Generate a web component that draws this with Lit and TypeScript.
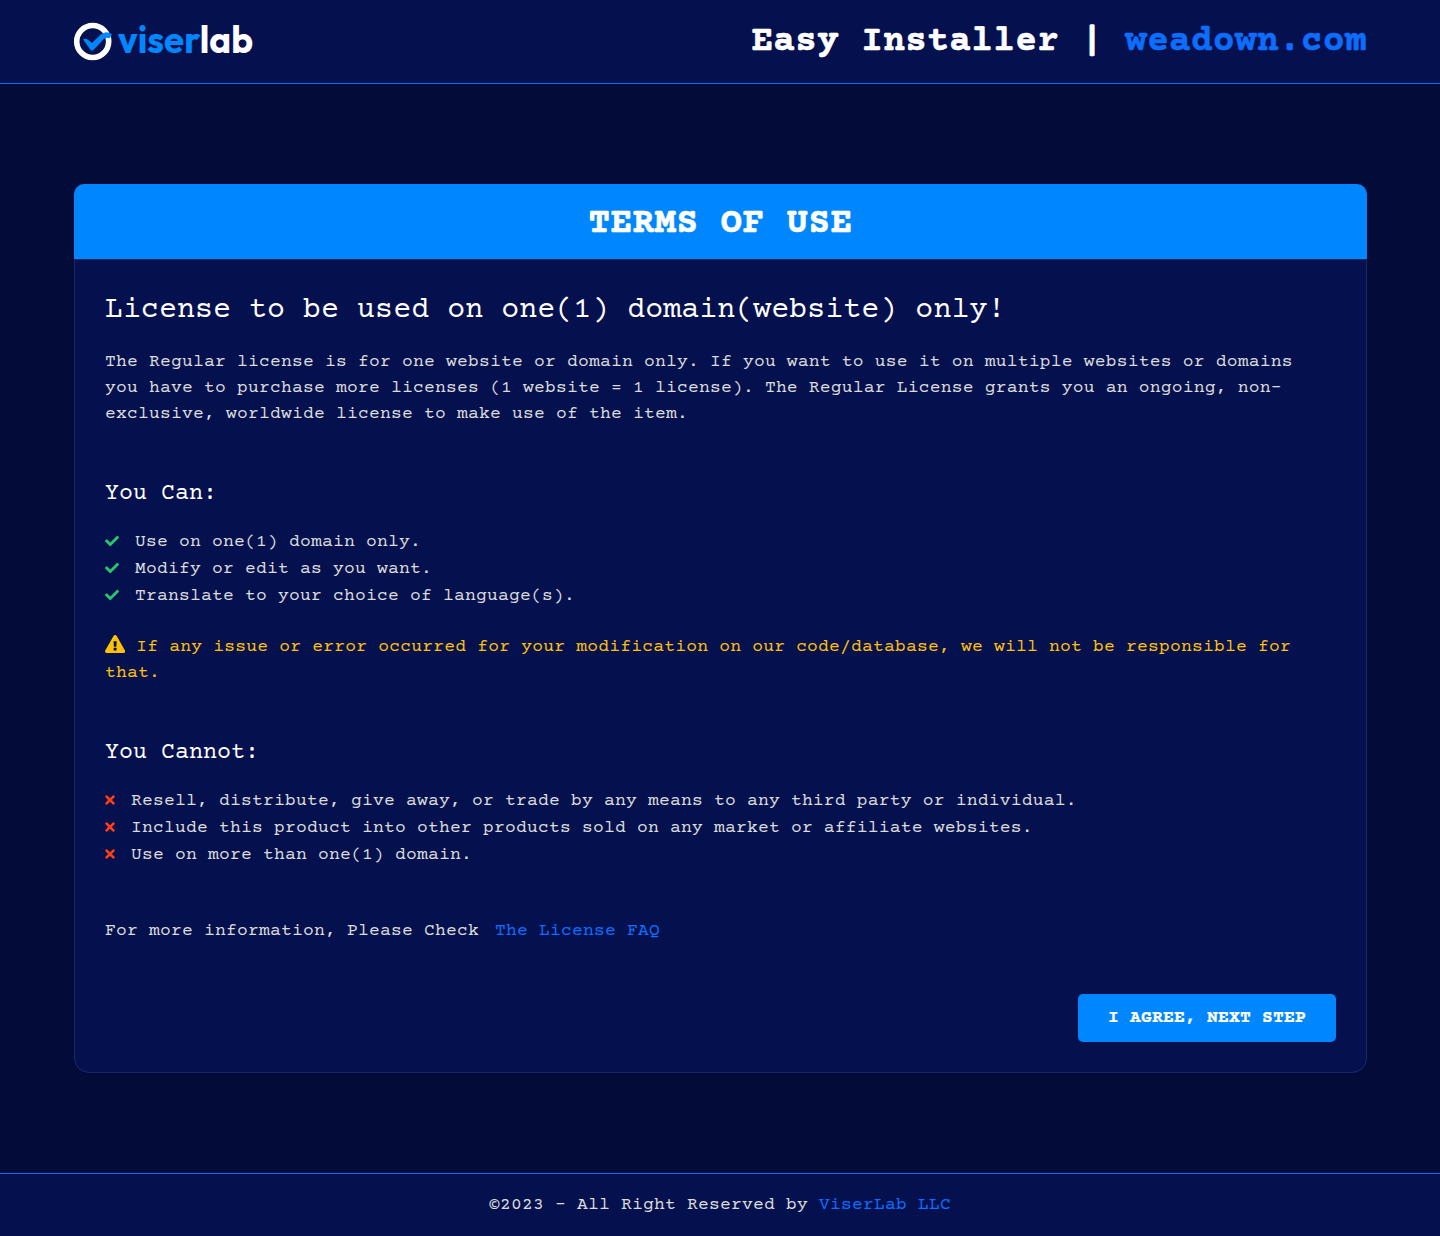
import { LitElement, html, css, svg } from "lit";
import { customElement } from "lit/decorators.js";

const check = svg`<path d="M173.898 439.404l-166.4-166.4c-9.997-9.997-9.997-26.206 0-36.204l36.203-36.204c9.997-9.998 26.207-9.998 36.204 0L192 312.69 432.095 72.596c9.997-9.997 26.207-9.997 36.204 0l36.203 36.204c9.997 9.997 9.997 26.206 0 36.204l-294.4 294.401c-9.998 9.997-26.207 9.997-36.204-.001z"/>`;
const cross = svg`<path d="M242.72 256l100.07-100.07c12.28-12.28 12.28-32.19 0-44.48l-22.24-22.24c-12.28-12.28-32.19-12.28-44.48 0L176 189.28 75.93 89.21c-12.28-12.28-32.19-12.28-44.48 0L9.21 111.45c-12.28 12.28-12.28 32.19 0 44.48L109.28 256 9.21 356.07c-12.28 12.28-12.28 32.19 0 44.48l22.24 22.24c12.28 12.28 32.2 12.28 44.48 0L176 322.72l100.07 100.07c12.28 12.28 32.2 12.28 44.48 0l22.24-22.24c12.28-12.28 12.28-32.19 0-44.48L242.72 256z"/>`;
const warn = svg`<path d="M569.517 440.013C587.975 472.007 564.806 512 527.94 512H48.054c-36.937 0-59.999-40.055-41.577-71.987L246.423 23.985c18.467-32.009 64.72-31.951 83.154 0l239.94 416.028zM288 354c-25.405 0-46 20.595-46 46s20.595 46 46 46 46-20.595 46-46-20.595-46-46-46zm-43.673-165.346l7.418 136c.347 6.364 5.609 11.346 11.982 11.346h48.546c6.373 0 11.635-4.982 11.982-11.346l7.418-136c.375-6.874-5.098-12.654-11.982-12.654h-63.383c-6.884 0-12.356 5.78-11.981 12.654z"/>`;

const allowed = [
  "Use on one(1) domain only.",
  "Modify or edit as you want.",
  "Translate to your choice of language(s).",
];
const forbidden = [
  "Resell, distribute, give away, or trade by any means to any third party or individual.",
  "Include this product into other products sold on any market or affiliate websites.",
  "Use on more than one(1) domain.",
];

@customElement("app-root")
export class AppRoot extends LitElement {
  static styles = css`
    :host {
      display: flex; flex-direction: column; min-height: 1236px;
      background: #030b38; color: #dbdbdb;
      font: 18px/26px "Courier Prime", "Liberation Mono", monospace;
      letter-spacing: 0.205px;
    }
    * { box-sizing: border-box; margin: 0; padding: 0; }
    a { color: #0d6efd; text-decoration: none; }
    header {
      height: 84px; padding: 0 73px 0 74px; background: #05114e;
      border-bottom: 1px solid #0d6efd;
      display: flex; justify-content: space-between; align-items: flex-start;
    }
    .logo { width: 180px; height: 40px; margin-top: 21px; display: block; overflow: visible; }
    .logo-text { font: 700 38px/40px "Outfit", "Quicksand", sans-serif; letter-spacing: 0; }
    .blue { fill: #0087ff; }
    .white { fill: #fff; }
    h1, .card-title { font-size: 36px; line-height: 43px; color: #fff; letter-spacing: 0.4px; -webkit-text-stroke: 0.5px currentColor; }
    h1 { margin-top: 21px; }
    h1 a { -webkit-text-stroke-color: #0d6efd; }
    main { padding: 100px 73px 100px 74px; }
    .card { border-radius: 15px; background: #05114e; }
    .card-title {
      height: 75px; border-radius: 10px 10px 0 0; background: #0087ff;
      padding-top: 19px; text-align: center;
    }
    .card-body {
      height: 814px; padding: 30px; border: 1px solid #1c2762;
      border-radius: 0 0 15px 15px; display: flex; flex-direction: column;
    }
    h3, h4 { font-weight: 400; color: #fff; letter-spacing: 0; }
    h3 { font-size: 30px; line-height: 36px; margin-top: 3px; letter-spacing: 0.02px; }
    h4 { font-size: 23.33px; line-height: 29px; margin-top: 53px; }
    .lead { margin-top: 20px; }
    ul { list-style: none; margin-top: 20px; }
    li { height: 27px; display: flex; align-items: flex-start; }
    li svg { width: 14px; height: 14px; margin: 5px 16px 0 0; fill: #28c76f; flex: none; }
    .no li svg { width: 10px; height: 14px; fill: #ff4017; }
    .warning { color: #ffc107; margin-top: 24px; }
    .warning svg { width: 20.25px; height: 18px; fill: #ffc107; vertical-align: -2px; }
    .info { margin-top: 49px; }
    .info a { margin-left: 5px; }
    .next {
      align-self: flex-end; margin-top: auto; width: 258px; height: 48px; line-height: 48px;
      background: #0087ff; color: #fff; border-radius: 5px; font-weight: 700; text-align: center;
      -webkit-text-stroke: 0.2px #fff;
    }
    footer {
      height: 63px; border-top: 1px solid #0d6efd; background: #05114e;
      text-align: center; padding-top: 18px;
    }
  `;

  render() {
    return html`
      <header>
        <svg class="logo" viewBox="0 0 180 40">
          <circle cx="18.7" cy="20.5" r="16" fill="none" stroke="#fff" stroke-width="5.6" />
          <path d="M9 18.2q3.3-1.2 6 1.2l3 2.6 8.5-8.2q5.5-5 11.5-.5l-2.5 4q-3.5-1.500-6 1L19.500 29q-1.500 1.200-3 0z" fill="#0087ff" />
          <text class="logo-text" x="44" y="31.5" textLength="135" lengthAdjust="spacingAndGlyphs"><tspan class="blue">viser</tspan><tspan class="white">lab</tspan></text>
        </svg>
        <h1>Easy Installer | <a>weadown.com</a></h1>
      </header>
      <main>
        <section class="card">
          <h2 class="card-title">TERMS OF USE</h2>
          <div class="card-body">
            <h3>License to be used on one(1) domain(website) only!</h3>
            <p class="lead">The Regular license is for one website or domain only. If you want to use it on multiple websites or domains you have to purchase more licenses (1 website = 1 license). The Regular License grants you an ongoing, non-exclusive, worldwide license to make use of the item.</p>
            <h4>You Can:</h4>
            <ul>${allowed.map((t) => html`<li><svg viewBox="0 0 512 512">${check}</svg>${t}</li>`)}</ul>
            <p class="warning"><svg viewBox="0 0 576 512">${warn}</svg> If any issue or error occurred for your modification on our code/database, we will not be responsible for that.</p>
            <h4>You Cannot:</h4>
            <ul class="no">${forbidden.map((t) => html`<li><svg viewBox="0 0 352 512">${cross}</svg>${t}</li>`)}</ul>
            <p class="info">For more information, Please Check <a>The License FAQ</a></p>
            <a class="next">I AGREE, NEXT STEP</a>
          </div>
        </section>
      </main>
      <footer>©2023 - All Right Reserved by <a>ViserLab LLC</a></footer>
    `;
  }
}
